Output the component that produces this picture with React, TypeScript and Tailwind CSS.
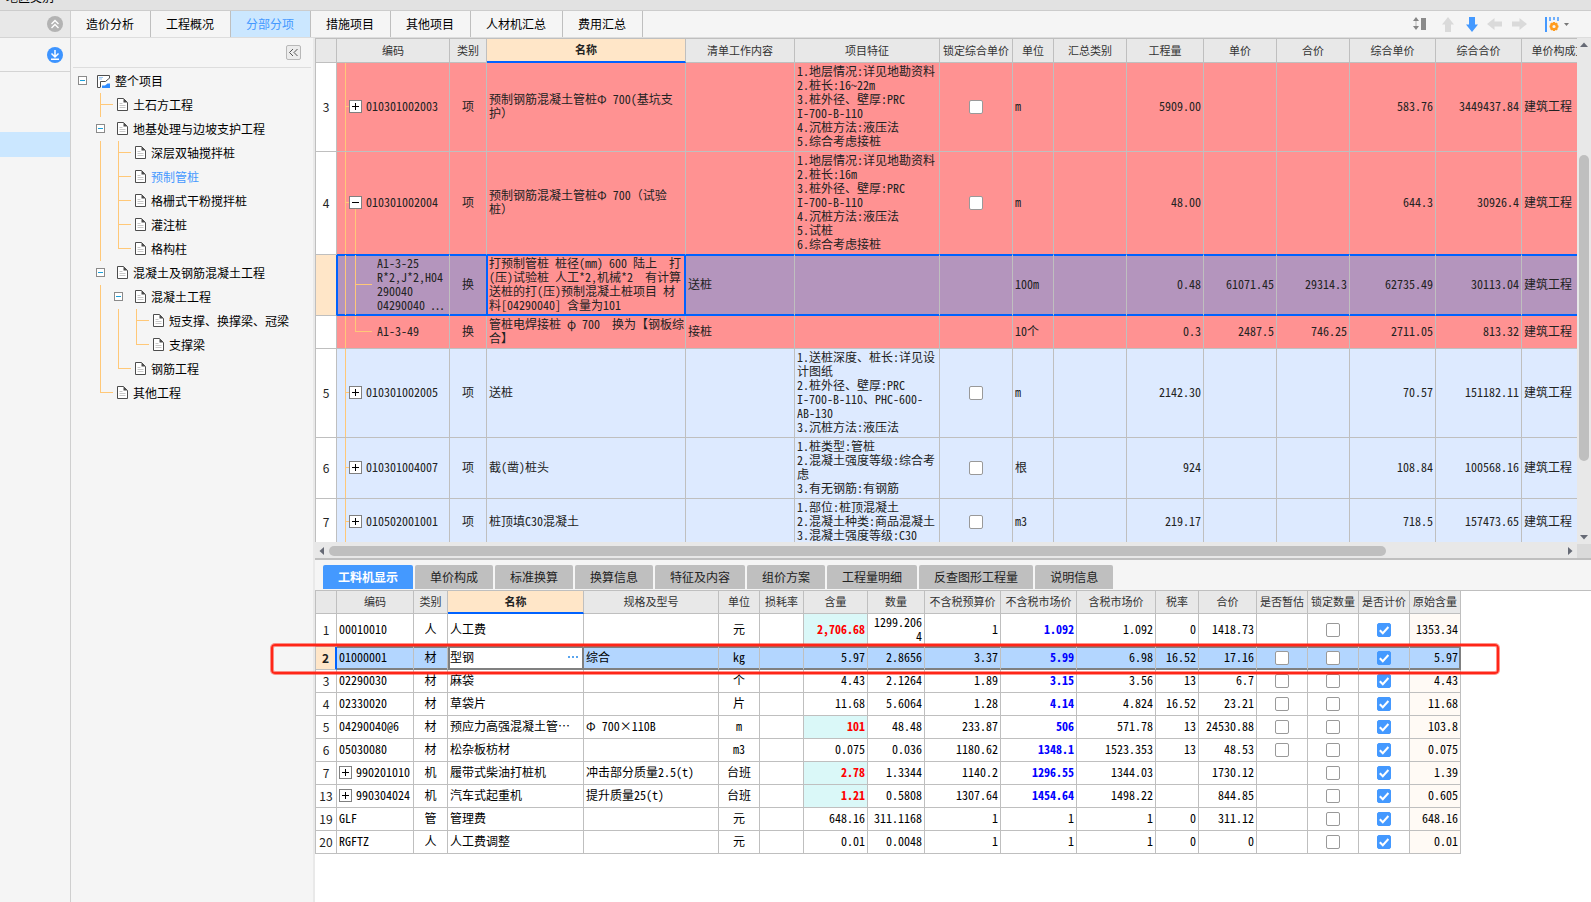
import React from "react";

type Guide = "pass" | "tee" | "corner" | "box";

const FONT_UI = "font-['Noto_Sans_CJK_SC',sans-serif]";
const FONT_CELL = "font-['Noto_Sans_Mono_CJK_SC','Noto_Sans_CJK_SC',monospace]";

/* ---------- shared controls ---------- */

function Tick({ checked = false, label }: { checked?: boolean; label: string }) {
  return (
    <label className="mx-auto grid size-[14px] place-items-center">
      <input
        type="checkbox"
        defaultChecked={checked}
        aria-label={label}
        className="peer col-start-1 row-start-1 size-[14px] appearance-none rounded-[2px] border border-[#999999] bg-white checked:border-[#4499ff] checked:bg-[#4499ff]"
      />
      <svg
        viewBox="0 0 14 14"
        className="pointer-events-none col-start-1 row-start-1 hidden size-[14px] peer-checked:block"
      >
        <path d="M2.8 7.2 5.8 10.2 11.4 4" fill="none" stroke="#fff" strokeWidth="2" />
      </svg>
    </label>
  );
}

function Toggle({ open = false }: { open?: boolean }) {
  return (
    <button type="button" aria-label={open ? "收起" : "展开"} className="block size-[13px] shrink-0">
      <svg viewBox="0 0 13 13" className="block size-[13px]" shapeRendering="crispEdges">
        <rect x="0.5" y="0.5" width="12" height="12" fill="#fff" stroke="#808080" />
        <rect x="3" y="6" width="7" height="1" fill="#000" />
        {!open && <rect x="6" y="3" width="1" height="7" fill="#000" />}
      </svg>
    </button>
  );
}

/* ---------- project tree ---------- */

const tree: { name: string; guides: Guide[]; active?: boolean }[] = [
  { name: "土石方工程", guides: ["tee"] },
  { name: "地基处理与边坡支护工程", guides: ["box"] },
  { name: "深层双轴搅拌桩", guides: ["pass", "tee"] },
  { name: "预制管桩", guides: ["pass", "tee"], active: true },
  { name: "格栅式干粉搅拌桩", guides: ["pass", "tee"] },
  { name: "灌注桩", guides: ["pass", "tee"] },
  { name: "格构柱", guides: ["pass", "corner"] },
  { name: "混凝土及钢筋混凝土工程", guides: ["box"] },
  { name: "混凝土工程", guides: ["pass", "box"] },
  { name: "短支撑、换撑梁、冠梁", guides: ["pass", "pass", "tee"] },
  { name: "支撑梁", guides: ["pass", "pass", "corner"] },
  { name: "钢筋工程", guides: ["pass", "corner"] },
  { name: "其他工程", guides: ["corner"] },
];

function TreeGuide({ kind }: { kind: Guide }) {
  return (
    <svg viewBox="0 0 18 24" className="h-6 w-[18px] shrink-0 overflow-visible" shapeRendering="crispEdges">
      {kind === "box" ? (
        <>
          <rect x="5.5" y="7.5" width="8" height="8" fill="#fff" stroke="#8a8a8a" />
          <rect x="7" y="11" width="5" height="1" fill="#1a9fd9" />
        </>
      ) : (
        <>
          <rect x="9" y="0" width="1" height={kind === "corner" ? 12 : 24} fill="#ffc878" />
          {kind !== "pass" && <rect x="9" y="11" width="13" height="1" fill="#ffc878" />}
        </>
      )}
    </svg>
  );
}

function DocIcon() {
  return (
    <svg viewBox="0 0 11 13" className="mr-[5px] mb-[2px] ml-2 h-[13px] w-[11px] shrink-0">
      <path d="M0.5 0.5h6l4 4v8h-10z" fill="#fff" stroke="#4d4d4d" />
      <path d="M6.5 0.5v4h4z" fill="#4d4d4d" />
      <path d="M2.5 5.5h3M2.5 7.5h6M2.5 9.5h6" stroke="#c8c8c8" />
    </svg>
  );
}

function RootIcon() {
  return (
    <svg viewBox="0 0 13 13" className="mr-[5px] ml-[6px] size-[13px] shrink-0">
      <path d="M.5 .5h12v12H.5z" fill="#fff" />
      <path d="M12.500 3.500V.5H.5v12h3" fill="none" stroke="#4d4d4d" />
      <path d="M2 2.500h4M2 4h3" stroke="#9cc8f5" />
      <path d="M3.500 12V6.500h5l3.500-3" fill="none" stroke="#4d4d4d" />
      <path d="M5 13V10.500h3l2.500-2h2.500V13z" fill="#2f8cff" />
    </svg>
  );
}

function TreePanel() {
  return (
    <aside className="w-[244px] shrink-0 border-r-2 border-[#e9e9e9] bg-[#f5f5f5]">
      <div className="mr-[2px] ml-[2px] flex h-[30px] justify-end border-b border-[#dddddd] pt-[7px] pr-[10px]">
        <button
          type="button"
          aria-label="折叠"
          className="flex size-[15px] items-center justify-center rounded-[2px] border border-[#b8b8b8] bg-[#ececec]"
        >
          <svg viewBox="0 0 11 9" className="h-[9px] w-[11px]">
            <path d="M5 1 1.500 4.500 5 8M9.500 1 6 4.500 9.500 8" fill="none" stroke="#555" />
          </svg>
        </button>
      </div>
      <ul className="pt-px pl-[2px] text-[12px] leading-6 text-black">
        <li className="flex h-6 items-center">
          <TreeGuide kind="box" />
          <RootIcon />
          整个项目
        </li>
        {tree.map((n) => (
          <li key={n.name} className={n.active ? "flex h-6 items-center pl-[18px] text-[#4499ff]" : "flex h-6 items-center pl-[18px]"}>
            {n.guides.map((g, i) => (
              <TreeGuide key={i} kind={g} />
            ))}
            <DocIcon />
            {n.name}
          </li>
        ))}
      </ul>
    </aside>
  );
}

/* ---------- top bar ---------- */

const pages = ["造价分析", "工程概况", "分部分项", "措施项目", "其他项目", "人材机汇总", "费用汇总"];

function Toolbar() {
  return (
    <div className="ml-auto flex items-center pr-[22px]">
      <button type="button" aria-label="行高" className="mr-4">
        <svg viewBox="0 0 13 14" className="h-[14px] w-[13px]">
          <path d="M3 0 6 4H0zM3 13 0 9h6z" fill="#858585" />
          <path d="M3 4v5" stroke="#b5b5b5" />
          <rect x="8" y="1" width="5" height="12" fill="#8a8a8a" />
        </svg>
      </button>
      <button type="button" aria-label="上移" className="mr-3">
        <svg viewBox="0 0 12 15" className="h-[15px] w-3">
          <path d="M6 0l6 7.500H9V15H3V7.500H0z" fill="#dadada" />
        </svg>
      </button>
      <button type="button" aria-label="下移" className="mr-[9px]">
        <svg viewBox="0 0 12 15" className="h-[15px] w-3">
          <path d="M6 15l6-7.500H9V0H3v7.500H0z" fill="#4499ff" />
        </svg>
      </button>
      <button type="button" aria-label="升级" className="mr-[10px]">
        <svg viewBox="0 0 15 12" className="h-3 w-[15px]">
          <path d="M0 6l7.500-6v3.500H15v5H7.500V12z" fill="#dadada" />
        </svg>
      </button>
      <button type="button" aria-label="降级" className="mr-[18px]">
        <svg viewBox="0 0 15 12" className="h-3 w-[15px]">
          <path d="M15 6L7.500 0v3.500H0v5h7.500V12z" fill="#dadada" />
        </svg>
      </button>
      <button type="button" aria-label="列设置" className="flex items-center gap-[5px]">
        <svg viewBox="0 0 14 15" className="h-[15px] w-[14px]">
          <rect x="0" y="0" width="2" height="15" fill="#4499ff" />
          <path d="M5 0v4M9 0v3M13 0v4" stroke="#4499ff" strokeWidth="1.500" />
          <circle cx="9" cy="9.500" r="2.800" fill="none" stroke="#ff9c1f" strokeWidth="2.400" />
          <path
            d="M9 5v1.500M9 12.500V14M4.500 9.500H6M12 9.500h1.500M5.800 6.300l1 1M11.200 11.700l1 1M12.200 6.300l-1 1M6.800 11.700l-1 1"
            stroke="#ff9c1f"
            strokeWidth="2"
          />
        </svg>
        <svg viewBox="0 0 5 3" className="h-[3px] w-[5px]">
          <path d="M0 0h5L2.500 3z" fill="#777" />
        </svg>
      </button>
    </div>
  );
}

/* ---------- bill grid ---------- */

const gridCols = [
  { name: "", w: "w-[21px]" },
  { name: "编码", w: "w-[113px]" },
  { name: "类别", w: "w-[37px]" },
  { name: "名称", w: "w-[199px]" },
  { name: "清单工作内容", w: "w-[109px]" },
  { name: "项目特征", w: "w-[145px]" },
  { name: "锁定综合单价", w: "w-[73px]" },
  { name: "单位", w: "w-[41px]" },
  { name: "汇总类别", w: "w-[73px]" },
  { name: "工程量", w: "w-[77px]" },
  { name: "单价", w: "w-[73px]" },
  { name: "合价", w: "w-[73px]" },
  { name: "综合单价", w: "w-[86px]" },
  { name: "综合合价", w: "w-[86px]" },
  { name: "单价构成文件", w: "w-[86px]" },
];

interface BillRow {
  no: string;
  h: number;
  code: string;
  kind: string;
  name: string;
  work?: string;
  feature?: string;
  unit: string;
  qty: string;
  price?: string;
  total?: string;
  cPrice: string;
  cTotal: string;
  node: "closed" | "open" | "child" | "last";
  tone: "red" | "blue" | "selected";
  edge?: boolean;
}

const bill: BillRow[] = [
  {
    no: "3", h: 88, code: "010301002003", kind: "项", name: "预制钢筋混凝土管桩Φ 700(基坑支\n护）",
    feature: "1.地层情况:详见地勘资料\n2.桩长:16~22m\n3.桩外径、壁厚:PRC\nI-700-B-110\n4.沉桩方法:液压法\n5.综合考虑接桩",
    unit: "m", qty: "5909.00", cPrice: "583.76", cTotal: "3449437.84", node: "closed", tone: "red",
  },
  {
    no: "4", h: 102, code: "010301002004", kind: "项", name: "预制钢筋混凝土管桩Φ 700（试验\n桩）",
    feature: "1.地层情况:详见地勘资料\n2.桩长:16m\n3.桩外径、壁厚:PRC\nI-700-B-110\n4.沉桩方法:液压法\n5.试桩\n6.综合考虑接桩",
    unit: "m", qty: "48.00", cPrice: "644.3", cTotal: "30926.4", node: "open", tone: "red", edge: true,
  },
  {
    no: "", h: 60, code: "A1-3-25\nR*2,J*2,H04\n290040\n04290040 ⋯", kind: "换",
    name: "打预制管桩 桩径(mm) 600 陆上  打\n(压)试验桩 人工*2,机械*2  有计算\n送桩的打(压)预制混凝土桩项目 材\n料[04290040] 含量为101",
    work: "送桩", unit: "100m", qty: "0.48", price: "61071.45", total: "29314.3", cPrice: "62735.49", cTotal: "30113.04",
    node: "child", tone: "selected", edge: true,
  },
  {
    no: "", h: 32, code: "A1-3-49", kind: "换", name: "管桩电焊接桩 φ 700  换为【钢板综\n合】",
    work: "接桩", unit: "10个", qty: "0.3", price: "2487.5", total: "746.25", cPrice: "2711.05", cTotal: "813.32",
    node: "last", tone: "red",
  },
  {
    no: "5", h: 88, code: "010301002005", kind: "项", name: "送桩",
    feature: "1.送桩深度、桩长:详见设\n计图纸\n2.桩外径、壁厚:PRC\nI-700-B-110、PHC-600-\nAB-130\n3.沉桩方法:液压法",
    unit: "m", qty: "2142.30", cPrice: "70.57", cTotal: "151182.11", node: "closed", tone: "blue",
  },
  {
    no: "6", h: 60, code: "010301004007", kind: "项", name: "截(凿)桩头",
    feature: "1.桩类型:管桩\n2.混凝土强度等级:综合考\n虑\n3.有无钢筋:有钢筋",
    unit: "根", qty: "924", cPrice: "108.84", cTotal: "100568.16", node: "closed", tone: "blue",
  },
  {
    no: "7", h: 46, code: "010502001001", kind: "项", name: "桩顶填C30混凝土",
    feature: "1.部位:桩顶混凝土\n2.混凝土种类:商品混凝土\n3.混凝土强度等级:C30",
    unit: "m3", qty: "219.17", cPrice: "718.5", cTotal: "157473.65", node: "closed", tone: "blue",
  },
];

function NodeGuide({ row }: { row: BillRow }) {
  const mid = Math.floor((row.h - 1) / 2);
  const child = row.node === "child" || row.node === "last";
  return (
    <svg width={child ? 40 : 29} height={row.h} className="block shrink-0" shapeRendering="crispEdges">
      <rect x="8" y="0" width="1" height={row.h} fill="#ffc878" />
      {child ? (
        <>
          <rect x="18" y="0" width="1" height={row.node === "last" ? mid : row.h} fill="#ffc878" />
          <rect x="18" y={mid} width="17" height="1" fill="#ffc878" />
        </>
      ) : (
        <>
          <rect x="8" y={mid} width="5" height="1" fill="#ffc878" />
          {row.node === "open" && <rect x="18" y={mid} width="1" height={row.h - mid} fill="#ffc878" />}
          <rect x="12.500" y={mid - 5.5} width="12" height="12" fill="#fff" stroke="#808080" />
          <rect x="15" y={mid} width="7" height="1" fill="#000" />
          {row.node === "closed" && <rect x="18" y={mid - 3} width="1" height="7" fill="#000" />}
        </>
      )}
    </svg>
  );
}

function BillLine({ row }: { row: BillRow }) {
  const sel = row.tone === "selected";
  const bg = sel ? "bg-[#b495bd]" : row.tone === "red" ? "bg-[#ff9292]" : "bg-[#ddeaff]";
  const line = row.edge ? "border-b border-b-[#0062ff]" : "border-b border-b-[#bfbfbf]";
  const inset = sel ? "shadow-[inset_0_1px_#0062ff,inset_0_-1px_#0062ff]" : "";
  const box = `border-r border-r-[#bfbfbf] whitespace-pre ${line} ${bg} ${inset}`;
  const cell = `${box} px-[2px] pb-[2px]`;
  const num = `${cell} text-right`;
  return (
    <tr>
      <td
        className={`border-r border-b border-b-[#bfbfbf] pb-px text-center ${FONT_UI} ${
          sel ? "border-r-[#0062ff] bg-[#ffe6c8]" : "border-r-[#bfbfbf] bg-white"
        }`}
      >
        {row.no}
      </td>
      <td
        className={`border-r border-r-[#bfbfbf] p-0 whitespace-pre ${line} ${bg} ${
          sel ? "shadow-[inset_1px_1px_#0062ff,inset_0_-1px_#0062ff]" : ""
        }`}
      >
        <div className="flex items-center">
          <NodeGuide row={row} />
          <span className="pb-[2px]">{row.code}</span>
        </div>
      </td>
      <td className={sel ? `border-r border-r-[#0062ff] pb-[2px] text-center ${line} ${bg} ${inset}` : `${cell} text-center`}>{row.kind}</td>
      <td
        className={
          sel
            ? "border-r border-b border-[#0062ff] bg-[#ff9292] px-[2px] pb-[2px] whitespace-pre shadow-[inset_0_0_0_1px_#0062ff]"
            : cell
        }
      >
        {row.name}
      </td>
      <td className={cell}>{row.work}</td>
      <td className={cell}>{row.feature}</td>
      <td className={box}>{row.feature && <Tick label={`锁定综合单价 ${row.code}`} />}</td>
      <td className={cell}>{row.unit}</td>
      <td className={cell} />
      <td className={num}>{row.qty}</td>
      <td className={num}>{row.price}</td>
      <td className={num}>{row.total}</td>
      <td className={num}>{row.cPrice}</td>
      <td className={num}>{row.cTotal}</td>
      <td className={cell}>建筑工程</td>
    </tr>
  );
}

function HeadRow({ cols, height }: { cols: { name: string; w: string }[]; height: string }) {
  return (
    <thead className={FONT_UI}>
      <tr className={height}>
        {cols.map((c, i) => (
          <th
            key={i}
            scope="col"
            className={`border-r border-r-[#bfbfbf] px-0 pt-0 pb-[2px] text-center text-[11px] leading-4 whitespace-nowrap ${c.w} ${
              c.name === "名称"
                ? "border-b-2 border-b-[#0062ff] bg-[#ffe6c8] font-bold text-[#222222]"
                : "border-b border-b-[#bfbfbf] bg-[#e8e8e8] font-normal text-[#333333]"
            }`}
          >
            {c.name}
          </th>
        ))}
      </tr>
    </thead>
  );
}

function BillGrid() {
  return (
    <section className="flex min-h-0 flex-1 flex-col bg-[#e8e8e8]">
      <div className="flex min-h-0 flex-1">
        <div className="mb-[2px] min-w-0 flex-1 overflow-hidden border-t border-l border-[#bfbfbf] bg-white">
          <table className={`w-[1292px] table-fixed border-separate border-spacing-0 text-[12px] leading-[14px] text-[#222222] ${FONT_CELL}`}>
            <HeadRow cols={gridCols} height="h-6" />
            <tbody>
              {bill.map((r) => (
                <BillLine key={r.code} row={r} />
              ))}
            </tbody>
          </table>
        </div>
        <div className="flex w-[14px] shrink-0 flex-col items-center">
          <svg viewBox="0 0 14 13" className="h-[13px] w-[14px] shrink-0">
            <path d="M3 9h8L7 4.500z" fill="#666a75" />
          </svg>
          <div className="grow-[104]" />
          <div className="w-[10px] grow-[306] rounded-full bg-[#bfbfbf]" />
          <div className="grow-[70]" />
          <svg viewBox="0 0 14 13" className="h-[13px] w-[14px] shrink-0">
            <path d="M3 4h8L7 8.500z" fill="#666a75" />
          </svg>
        </div>
      </div>
      <div className="flex h-[14px] shrink-0 items-center">
        <svg viewBox="0 0 14 14" className="size-[14px] shrink-0">
          <path d="M9 3v8L4.500 7z" fill="#666a75" />
        </svg>
        <div className="h-[10px] grow-[1057] rounded-full bg-[#bfbfbf]" />
        <div className="grow-[177]" />
        <svg viewBox="0 0 14 14" className="size-[14px] shrink-0">
          <path d="M5 3v8l4.500-4z" fill="#666a75" />
        </svg>
        <div className="h-full w-[14px] bg-[#dadada]" />
      </div>
    </section>
  );
}

/* ---------- detail panel ---------- */

const detailTabs = ["工料机显示", "单价构成", "标准换算", "换算信息", "特征及内容", "组价方案", "工程量明细", "反查图形工程量", "说明信息"];

const detailCols = [
  { name: "", w: "w-[21px]" },
  { name: "编码", w: "w-[77px]" },
  { name: "类别", w: "w-[34px]" },
  { name: "名称", w: "w-[136px]" },
  { name: "规格及型号", w: "w-[135px]" },
  { name: "单位", w: "w-[41px]" },
  { name: "损耗率", w: "w-[44px]" },
  { name: "含量", w: "w-[64px]" },
  { name: "数量", w: "w-[57px]" },
  { name: "不含税预算价", w: "w-[76px]" },
  { name: "不含税市场价", w: "w-[76px]" },
  { name: "含税市场价", w: "w-[79px]" },
  { name: "税率", w: "w-[43px]" },
  { name: "合价", w: "w-[58px]" },
  { name: "是否暂估", w: "w-[51px]" },
  { name: "锁定数量", w: "w-[51px]" },
  { name: "是否计价", w: "w-[51px]" },
  { name: "原始含量", w: "w-[51px]" },
];

// no, code, kind, name, spec, unit, content, quantity, budget, market, taxed market, rate, total, original content
const detail: string[][] = [
  ["1", "00010010", "人", "人工费", "", "元", "2,706.68", "1299.206\n4", "1", "1.092", "1.092", "0", "1418.73", "1353.34"],
  ["2", "01000001", "材", "型钢", "综合", "kg", "5.97", "2.8656", "3.37", "5.99", "6.98", "16.52", "17.16", "5.97"],
  ["3", "02290030", "材", "麻袋", "", "个", "4.43", "2.1264", "1.89", "3.15", "3.56", "13", "6.7", "4.43"],
  ["4", "02330020", "材", "草袋片", "", "片", "11.68", "5.6064", "1.28", "4.14", "4.824", "16.52", "23.21", "11.68"],
  ["5", "04290040@6", "材", "预应力高强混凝土管…", "Φ 700×110B", "m", "101", "48.48", "233.87", "506", "571.78", "13", "24530.88", "103.8"],
  ["6", "05030080", "材", "松杂板枋材", "", "m3", "0.075", "0.036", "1180.62", "1348.1", "1523.353", "13", "48.53", "0.075"],
  ["7", "990201010", "机", "履带式柴油打桩机", "冲击部分质量2.5(t)", "台班", "2.78", "1.3344", "1140.2", "1296.55", "1344.03", "", "1730.12", "1.39"],
  ["13", "990304024", "机", "汽车式起重机", "提升质量25(t)", "台班", "1.21", "0.5808", "1307.64", "1454.64", "1498.22", "", "844.85", "0.605"],
  ["19", "GLF", "管", "管理费", "", "元", "648.16", "311.1168", "1", "1", "1", "0", "311.12", "648.16"],
  ["20", "RGFTZ", "人", "人工费调整", "", "元", "0.01", "0.0048", "1", "1", "1", "0", "0", "0.01"],
];

function DetailLine({ r }: { r: string[] }) {
  const [no, code, kind, name, spec, unit, content, qty, budget, market, taxed, rate, total, original] = r;
  const sel = no === "2";
  const machine = kind === "机";
  const edited = ["1", "5", "7", "13"].includes(no);
  const priced = market !== "1";
  const frame = sel
    ? "border-r border-b border-r-[#bfbfbf] border-b-[#808080] whitespace-pre shadow-[inset_0_1px_#808080,inset_0_-1px_#808080]"
    : no === "1"
      ? "border-r border-b border-r-[#bfbfbf] border-b-[#808080] whitespace-pre"
      : "border-r border-b border-[#bfbfbf] whitespace-pre";
  const base = `${frame} px-[2px] pb-[2px]`;
  const fill = sel ? "bg-[#b3d6ff]" : "bg-white";
  const cell = `${base} ${fill}`;
  const tick = `${frame} ${fill}`;
  return (
    <tr className={no === "1" ? "h-[33px]" : "h-[23px]"}>
      <td
        className={`border-r border-b border-b-[#bfbfbf] pb-px text-center text-[#222222] ${FONT_UI} ${
          sel ? "border-r-2 border-r-[#0062ff] bg-[#ffe6c8] font-bold" : "border-r-[#bfbfbf] bg-white"
        }`}
      >
        {no}
      </td>
      <td className={cell}>
        {machine ? (
          <span className="flex items-center gap-1">
            <Toggle />
            {code}
          </span>
        ) : (
          code
        )}
      </td>
      <td className={`${cell} text-center`}>{kind}</td>
      {sel ? (
        <td className="border-r-2 border-b border-l-2 border-[#808080] bg-white px-0 pb-[2px] shadow-[inset_0_1px_#808080,inset_0_-1px_#808080]">
          <div className="flex items-center justify-between pr-[3px]">
            {name}
            <button type="button" aria-label="选择材料">
              <svg viewBox="0 0 12 3" className="h-[3px] w-3">
                <path d="M1 0h2v2H1zM5 0h2v2H5zM9 0h2v2H9z" fill="#5aa5ee" />
              </svg>
            </button>
          </div>
        </td>
      ) : (
        <td className={cell}>{name}</td>
      )}
      <td className={cell}>{spec}</td>
      <td className={`${cell} text-center`}>{unit}</td>
      <td className={cell} />
      <td className={edited ? `${base} bg-[#daf8f8] text-right font-bold text-[#ff0000]` : `${cell} text-right`}>{content}</td>
      <td className={`${cell} text-right`}>{qty}</td>
      <td className={`${cell} text-right`}>{budget}</td>
      <td className={priced ? `${cell} text-right font-bold text-[#0000ff]` : `${cell} text-right`}>{market}</td>
      <td className={`${cell} text-right`}>{taxed}</td>
      <td className={`${cell} text-right`}>{rate}</td>
      <td className={`${cell} text-right`}>{total}</td>
      <td className={tick}>{kind === "材" && <Tick label={`是否暂估 ${code}`} />}</td>
      <td className={tick}>
        <Tick label={`锁定数量 ${code}`} />
      </td>
      <td className={tick}>
        <Tick checked label={`是否计价 ${code}`} />
      </td>
      <td
        className={
          sel
            ? "border-r border-b border-[#808080] bg-[#b3d6ff] px-[2px] pb-[2px] text-right shadow-[inset_0_1px_#808080,inset_-1px_-1px_#808080]"
            : `${base} bg-[#fffaf5] text-right`
        }
      >
        {original}
      </td>
    </tr>
  );
}

function DetailPanel() {
  return (
    <section className="h-[344px] shrink-0 border-t-2 border-[#bfbfbf] bg-white">
      <nav className="flex h-[30px] gap-[2px] bg-[#f5f5f5] pt-[5px] pl-2 text-[12px]">
        {detailTabs.map((t, i) => (
          <button
            key={t}
            type="button"
            className={
              i === 0
                ? "h-6 rounded-t-[2px] bg-[#4499ff] px-[15px] font-bold text-white"
                : "h-6 rounded-t-[2px] bg-[#bfbfbf] px-[15px] text-[#222222]"
            }
          >
            {t}
          </button>
        ))}
      </nav>
      <div className="relative border-t border-l border-[#bfbfbf]">
        <table className={`w-[1145px] table-fixed border-separate border-spacing-0 text-[12px] leading-[14px] text-black ${FONT_CELL}`}>
          <HeadRow cols={detailCols} height="h-[23px]" />
          <tbody>
            {detail.map((r) => (
              <DetailLine key={r[0]} r={r} />
            ))}
          </tbody>
        </table>
        <div className="pointer-events-none absolute top-[53px] -left-[45px] h-[30px] w-[1228px] rounded-[4px] border-2 border-[#ff2618] shadow-[0_0_0_1px_rgba(255,38,24,0.5),inset_0_0_0_1px_rgba(255,38,24,0.5)]" />
      </div>
    </section>
  );
}

/* ---------- page ---------- */

export default function App() {
  return (
    <div className={`flex h-screen flex-col overflow-hidden bg-[#f5f5f5] ${FONT_UI}`}>
      <header className="flex h-[11px] shrink-0 items-end overflow-hidden border-b border-[#cccccc] bg-[#e2e2e2] pb-[7px] pl-[6px] text-[12px] leading-3 text-black">
        地区类别
      </header>
      <div className="flex min-h-0 flex-1">
        <aside className="w-[71px] shrink-0 border-r border-[#cfcfcf]">
          <div className="flex h-[27px] items-center justify-end border-b border-[#d4d4d4] bg-[#e8e8e8] pr-[7px]">
            <button type="button" aria-label="收起">
              <svg viewBox="0 0 16 16" className="block size-4">
                <circle cx="8" cy="8" r="8" fill="#b3b3b3" />
                <path d="M4.500 8 8 4.500 11.500 8M4.500 12 8 8.500l3.500 3.500" fill="none" stroke="#fff" strokeWidth="1.400" />
              </svg>
            </button>
          </div>
          <div className="flex h-[34px] items-center justify-end border-b border-[#d4d4d4] pr-[7px]">
            <button type="button" aria-label="下载">
              <svg viewBox="0 0 16 16" className="block size-4">
                <circle cx="8" cy="8" r="8" fill="#3d94ff" />
                <path d="M8 3v7M4.500 6.500 8 10l3.500-3.500M4 12.200h8" fill="none" stroke="#fff" strokeWidth="1.500" />
              </svg>
            </button>
          </div>
          <div className="mt-15 h-[25px] bg-[#cbe7ff]" />
        </aside>
        <div className="flex min-w-0 flex-1 flex-col">
          <nav className="flex h-[27px] shrink-0 border-b border-[#dddddd] text-[12px]">
            {pages.map((p) => (
              <button
                key={p}
                type="button"
                className={
                  p === "分部分项"
                    ? "border-r border-[#bfbfbf] bg-[#cbe7ff] pr-4 pl-[15px] text-[#4499ff]"
                    : "border-r border-[#bfbfbf] pr-4 pl-[15px] text-black"
                }
              >
                {p}
              </button>
            ))}
            <Toolbar />
          </nav>
          <div className="flex min-h-0 flex-1">
            <TreePanel />
            <main className="flex min-w-0 flex-1 flex-col">
              <BillGrid />
              <DetailPanel />
            </main>
          </div>
        </div>
      </div>
    </div>
  );
}
